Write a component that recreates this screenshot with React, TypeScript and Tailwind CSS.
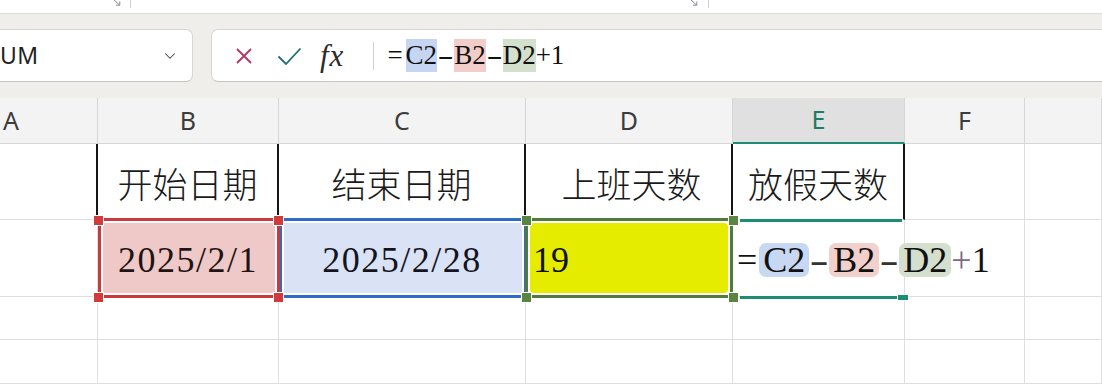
import React from 'react';
import { ChevronDown } from 'lucide-react';

const serif = "font-['Liberation_Serif','Times_New_Roman',serif]";
const cjk = "font-['Noto_Sans_CJK_SC','Noto_Sans',sans-serif]";

const Launcher = () => (
  <svg width="8" height="7" viewBox="0 0 8 7" className="self-start mt-[-1px]">
    <path d="M1 1 L6.5 6 M3 6.2 H6.8 V2.5" stroke="#8a8a8a" strokeWidth="1" fill="none" />
  </svg>
);

const headerBase =
  'flex items-center justify-center bg-[#f3f3f3] border-r border-b border-[#d6d6d6] text-[25px] text-[#3c3c3c]';
const grid = 'border-r border-b border-[#dedede]';
const rowOne = `flex items-center justify-center pt-[4px] border-r-2 border-r-[#161616] border-b border-b-[#dedede] text-[35px] font-light text-[#1a1a1a] ${cjk}`;

export default function App() {
  return (
    <div className="w-[1102px] h-[384px] overflow-hidden bg-white font-['Noto_Sans',sans-serif]">
      {/* ribbon edge */}
      <div className="h-[14px] flex bg-white border-b border-[#dcdcdc]">
        <div className="ml-[113px]">
          <Launcher />
        </div>
        <div className="ml-[9px] w-px h-[8px] bg-[#cfcfcf]" />
        <div className="ml-[559px]">
          <Launcher />
        </div>
        <div className="ml-[10px] w-px h-[8px] bg-[#cfcfcf]" />
      </div>

      {/* formula bar */}
      <div className="flex bg-[#efeeeb] pt-[15px] pb-[16px]">
        <div className="ml-[-14px] w-[207px] h-[53px] flex items-center justify-between rounded-[7px] border border-[#d6d6d6] border-b-[#c4c4c4] bg-white pl-[13px] pr-[13px]">
          <span className="text-[23px] text-[#222] tracking-[0.5px]">UM</span>
          <ChevronDown size={18} strokeWidth={1.4} className="text-[#444]" />
        </div>
        <div className="ml-[18px] mr-[-12px] flex-1 h-[53px] flex items-center rounded-[7px] border border-[#d6d6d6] border-b-[#c4c4c4] bg-white">
          <svg width="18" height="18" viewBox="0 0 18 18" className="ml-[23px]">
            <path d="M2 2 L16 16 M16 2 L2 16" stroke="#b73462" strokeWidth="1.8" fill="none" />
          </svg>
          <svg width="25" height="18" viewBox="0 0 25 18" className="ml-[24px]">
            <path d="M1.5 9.5 L9 17 L23.5 1.5" stroke="#1f6c77" strokeWidth="1.8" fill="none" />
          </svg>
          <span className={`ml-[18px] italic text-[31px] tracking-[1px] text-[#2a2a2a] leading-none ${serif}`}>fx</span>
          <div className="ml-[29px] w-px h-[28px] bg-[#cfcfcf]" />
          <div className={`ml-[13px] flex items-center text-[27px] leading-none text-[#111] ${serif}`}>
            <span>=</span>
            <span className="ml-[3px] h-[33px] flex items-center bg-[#c6d6f2]">C2</span>
            <span className="mx-[4px] inline-block scale-x-[1.8]">-</span>
            <span className="h-[33px] flex items-center bg-[#f2cdc9]">B2</span>
            <span className="mx-[4px] inline-block scale-x-[1.8]">-</span>
            <span className="h-[33px] flex items-center bg-[#d3e1cc]">D2</span>
            <span>+1</span>
          </div>
        </div>
      </div>

      {/* sheet */}
      <div className="grid grid-cols-[98px_181px_247px_207px_172px_120px_1fr] grid-rows-[46px_76px_77px_43px_44px]">
        {/* column headers */}
        <div className={`${headerBase} justify-start pl-[3px]`}>A</div>
        <div className={headerBase}>B</div>
        <div className={headerBase}>C</div>
        <div className={headerBase}>D</div>
        <div className="flex items-center justify-center bg-[#e0e0e0] border-r border-[#d6d6d6] border-b-2 border-b-[#1e8c72] text-[25px] text-[#1d7c63]">
          E
        </div>
        <div className={headerBase}>F</div>
        <div className={headerBase} />

        {/* row 1 */}
        <div className={rowOne} />
        <div className={rowOne}>开始日期</div>
        <div className={rowOne}>结束日期</div>
        <div className={`${rowOne} pl-[6px]`}>上班天数</div>
        <div className={rowOne}>放假天数</div>
        <div className={grid} />
        <div className={grid} />

        {/* row 2 */}
        <div className={grid} />
        <div className={`${grid} relative flex items-center justify-center`}>
          <div className="absolute left-0 top-[-2px] right-[-2px] bottom-[-2px] border-[3px] border-[#c9393d] z-[2]">
            <div className="absolute inset-[2px] bg-[#efc9c7]" />
          </div>
          <span className={`relative z-[2] pt-[3px] text-[36px] tracking-[1.5px] text-[#1f1414] ${serif}`}>2025/2/1</span>
          <div className="absolute left-[-4px] top-[-4px] w-[9px] h-[9px] bg-[#d23b3b] ring-1 ring-white z-[3]" />
          <div className="absolute left-[176px] top-[-4px] w-[9px] h-[9px] bg-[#d23b3b] ring-1 ring-white z-[3]" />
          <div className="absolute left-[-4px] top-[73px] w-[9px] h-[9px] bg-[#d23b3b] ring-1 ring-white z-[3]" />
          <div className="absolute left-[176px] top-[73px] w-[9px] h-[9px] bg-[#d23b3b] ring-1 ring-white z-[3]" />
        </div>
        <div className={`${grid} relative flex items-center justify-center`}>
          <div className="absolute left-0 top-[-2px] right-[-2px] bottom-[-2px] border-[3px] border-[#2f6cc6] z-[1]">
            <div className="absolute inset-[2px] bg-[#d9e3f5]" />
          </div>
          <span className={`relative z-[1] pt-[3px] text-[36px] tracking-[1.5px] text-[#14141f] ${serif}`}>2025/2/28</span>
        </div>
        <div className={`${grid} relative flex items-center`}>
          <div className="absolute left-[-1px] top-[-2px] right-[-1px] bottom-[-2px] border-[3px] border-[#4f7c3c] z-[2]">
            <div className="absolute inset-[2px] rounded-[4px] bg-[#e6ec00]" />
          </div>
          <span className={`relative z-[2] pl-[7px] pt-[3px] text-[36px] text-[#111] ${serif}`}>19</span>
          <div className="absolute left-[-4px] top-[-4px] w-[9px] h-[9px] bg-[#58853f] ring-1 ring-white z-[3]" />
          <div className="absolute left-[203px] top-[-4px] w-[9px] h-[9px] bg-[#58853f] ring-1 ring-white z-[3]" />
          <div className="absolute left-[-4px] top-[73px] w-[9px] h-[9px] bg-[#58853f] ring-1 ring-white z-[3]" />
          <div className="absolute left-[203px] top-[73px] w-[9px] h-[9px] bg-[#58853f] ring-1 ring-white z-[3]" />
        </div>
        <div className={`${grid} relative flex items-center pl-[4px] pt-[3px]`}>
          <div className="absolute left-[7px] right-[2px] top-[-1px] h-[3px] bg-[#1e8c72] z-[2]" />
          <div className="absolute left-[7px] w-[158px] top-[76px] h-[3px] bg-[#1e8c72] z-[2]" />
          <div className="absolute left-[165px] top-[75px] w-[10px] h-[5px] bg-[#1e8c72] ring-1 ring-white z-[3]" />
          <div className={`flex items-center text-[36px] leading-none text-[#111] ${serif}`}>
            <span>=</span>
            <span className="ml-[2px] h-[34px] flex items-center rounded-[7px] bg-[#c9d8f2] px-[4px]">C2</span>
            <span className="mx-[4px] inline-block scale-x-[1.6] text-[#333]">-</span>
            <span className="h-[34px] flex items-center rounded-[7px] bg-[#f2d0cb] px-[4px]">B2</span>
            <span className="mx-[4px] inline-block scale-x-[1.6] text-[#333]">-</span>
            <span className="h-[34px] flex items-center rounded-[7px] bg-[#d4e0cd] px-[4px]">D2</span>
            <span className="text-[#7b6888]">+</span>
            <span>1</span>
          </div>
        </div>
        <div className={grid} />
        <div className={grid} />

        {/* rows 3 and 4 */}
        {Array.from({ length: 14 }).map((_, i) => (
          <div key={i} className={grid} />
        ))}
      </div>
    </div>
  );
}
